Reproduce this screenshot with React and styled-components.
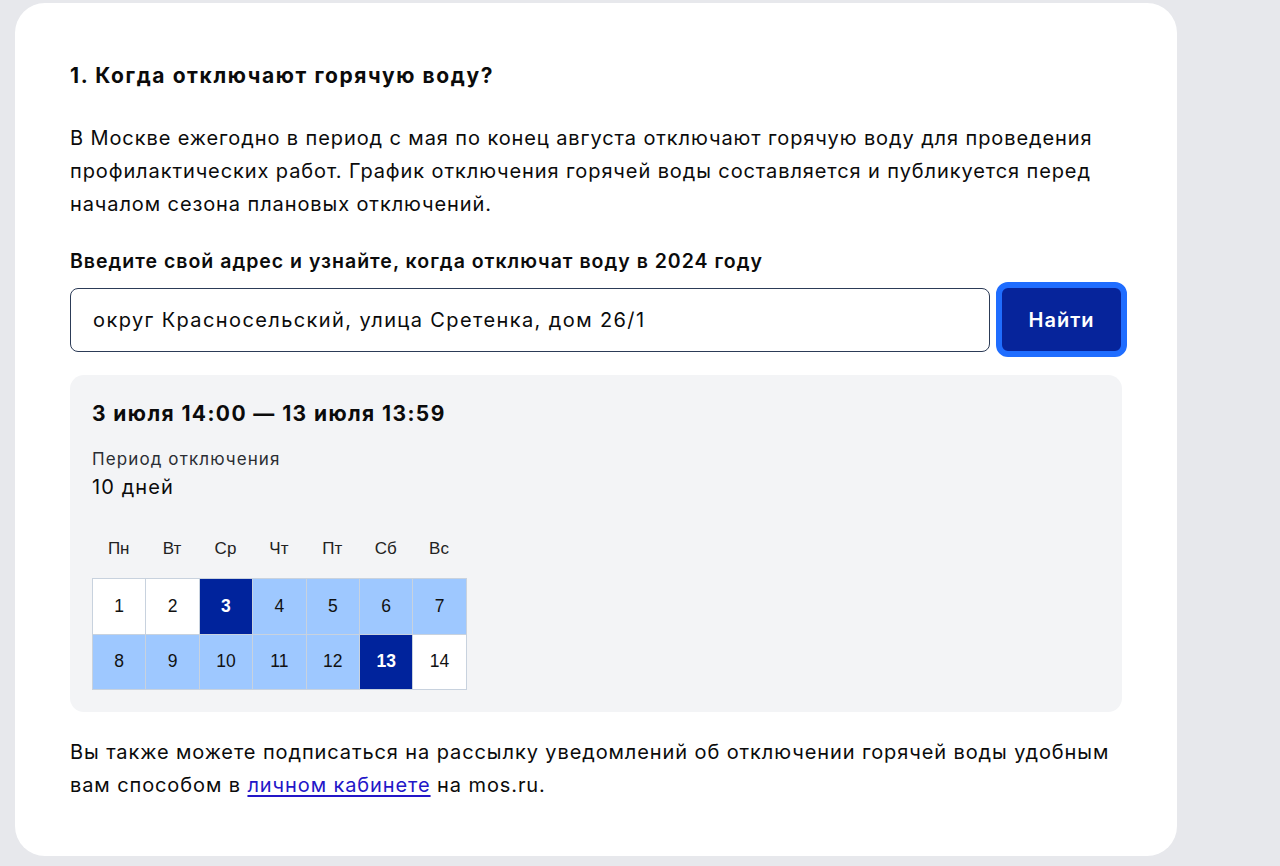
import React, { useState } from "react";
import styled, { createGlobalStyle } from "styled-components";

const GlobalStyle = createGlobalStyle`
  html, body {
    margin: 0;
    padding: 0;
    background: #e7e8ec;
  }
  body {
    font-family: Inter, "Noto Sans", "Liberation Sans", sans-serif;
    color: #0b0b0b;
  }
`;

const days = [
  { n: 1, kind: "off" },
  { n: 2, kind: "off" },
  { n: 3, kind: "edge" },
  { n: 4, kind: "in" },
  { n: 5, kind: "in" },
  { n: 6, kind: "in" },
  { n: 7, kind: "in" },
  { n: 8, kind: "in" },
  { n: 9, kind: "in" },
  { n: 10, kind: "in" },
  { n: 11, kind: "in" },
  { n: 12, kind: "in" },
  { n: 13, kind: "edge" },
  { n: 14, kind: "off" },
];

const weekDays = ["Пн", "Вт", "Ср", "Чт", "Пт", "Сб", "Вс"];

const App = () => {
  const [address, setAddress] = useState(
    "округ Красносельский, улица Сретенка, дом 26/1"
  );

  return (
    <Page>
      <GlobalStyle />
      <Card>
        <Heading>1. Когда отключают горячую воду?</Heading>
        <Text>
          В Москве ежегодно в период с мая по конец августа отключают горячую
          воду для проведения профилактических работ. График отключения горячей
          воды составляется и публикуется перед началом сезона плановых
          отключений.
        </Text>
        <Label>Введите свой адрес и узнайте, когда отключат воду в 2024 году</Label>
        <SearchRow>
          <Input value={address} onChange={(e) => setAddress(e.target.value)} />
          <FindButton>Найти</FindButton>
        </SearchRow>
        <Result>
          <Range>3 июля 14:00 — 13 июля 13:59</Range>
          <Caption>Период отключения</Caption>
          <Value>10 дней</Value>
          <Calendar>
            {weekDays.map((d) => (
              <WeekDay key={d}>{d}</WeekDay>
            ))}
            {days.map((d) => (
              <Day key={d.n} $kind={d.kind}>
                {d.n}
              </Day>
            ))}
          </Calendar>
        </Result>
        <Text>
          Вы также можете подписаться на рассылку уведомлений об отключении
          горячей воды удобным вам способом в{" "}
          <Link href="#">личном кабинете</Link> на mos.ru.
        </Text>
      </Card>
    </Page>
  );
};

export default App;

const Page = styled.div`
  padding: 3px 103px 11px 15px;
  min-height: 866px;
  box-sizing: border-box;
`;

const Card = styled.div`
  background: #fff;
  border-radius: 30px;
  padding: 58px 55px 54px 55px;
  display: flex;
  flex-direction: column;
`;

const Heading = styled.h2`
  margin: 0 0 31px;
  font-size: 21px;
  line-height: 30px;
  font-weight: 700;
  letter-spacing: 1.6px;
`;

const Text = styled.p`
  margin: 0;
  font-size: 20px;
  line-height: 33px;
  font-weight: 400;
  letter-spacing: 0.9px;
`;

const Label = styled.div`
  margin: 25px 0 6px;
  font-size: 19.5px;
  line-height: 30px;
  font-weight: 600;
  letter-spacing: 1px;
`;

const SearchRow = styled.div`
  display: flex;
  align-items: center;
  gap: 6px;
  width: 1057px;
`;

const Input = styled.input`
  flex: 1;
  height: 64px;
  box-sizing: border-box;
  border: 1px solid #2c3b57;
  border-radius: 8px;
  padding: 0 22px;
  font-family: inherit;
  font-size: 20px;
  letter-spacing: 1.4px;
  color: #0b0b0b;
  outline: none;
`;

const FindButton = styled.button`
  width: 131px;
  height: 75px;
  box-sizing: border-box;
  border: 6px solid #1f6dff;
  border-radius: 12px;
  background: #06249b;
  color: #fff;
  font-family: inherit;
  font-size: 20px;
  font-weight: 600;
  letter-spacing: 1px;
  cursor: pointer;
`;

const Result = styled.div`
  margin: 18px 0 24px;
  width: 1052px;
  box-sizing: border-box;
  background: #f3f4f6;
  border-radius: 14px;
  padding: 25px 22px 23px;
`;

const Range = styled.div`
  font-size: 21px;
  line-height: 28px;
  font-weight: 700;
  letter-spacing: 1.4px;
  margin-bottom: 18px;
`;

const Caption = styled.div`
  font-size: 17px;
  line-height: 26px;
  letter-spacing: 1.1px;
  color: #2a2d33;
`;

const Value = styled.div`
  font-size: 20px;
  line-height: 30px;
  letter-spacing: 1.1px;
  margin-bottom: 33px;
`;

const Calendar = styled.div`
  display: grid;
  grid-template-columns: repeat(7, 53.4px);
  grid-template-rows: 43px;
  grid-auto-rows: 55.5px;
  width: max-content;
  font-family: "Liberation Sans", Arial, sans-serif;
`;

const WeekDay = styled.div`
  display: flex;
  align-items: flex-start;
  justify-content: center;
  font-size: 17px;
  color: #222;
  padding-top: 4px;
  box-sizing: border-box;
`;

const Day = styled.div`
  display: flex;
  align-items: center;
  justify-content: center;
  font-size: 17.5px;
  box-sizing: border-box;
  border: 1px solid #c8d2de;
  margin: 0 -1px -1px 0;
  background: ${(p) =>
    p.$kind === "edge" ? "#00239c" : p.$kind === "in" ? "#9ec8ff" : "#fff"};
  color: ${(p) => (p.$kind === "edge" ? "#fff" : "#111")};
  font-weight: ${(p) => (p.$kind === "edge" ? 700 : 400)};
`;

const Link = styled.a`
  color: #2316c8;
  text-decoration: underline;
  text-underline-offset: 3px;
`;
